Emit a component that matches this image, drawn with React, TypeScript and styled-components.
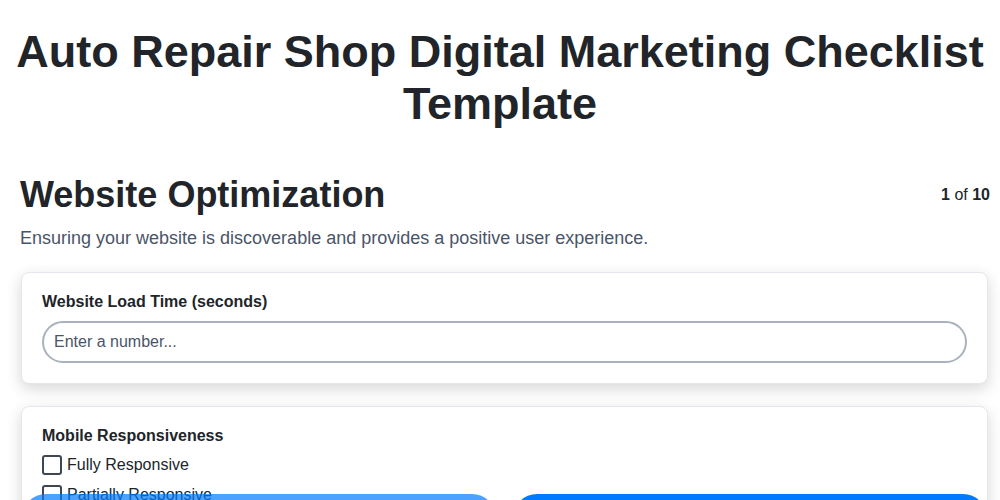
import React from "react";
import styled, { createGlobalStyle } from "styled-components";

const GlobalStyle = createGlobalStyle`
  body {
    margin: 0;
    background: #ffffff;
    font-family: "Liberation Sans", Arial, sans-serif;
    color: #212529;
  }
`;

const Page = styled.div`
  min-height: 100vh;
`;

const Title = styled.h1`
  margin: 26px 0 0;
  font-size: 45px;
  font-weight: 700;
  text-align: center;
  color: #212529;
`;

const Main = styled.main`
  padding: 0 10px 80px 20px;
`;

const SectionHeader = styled.div`
  display: flex;
  align-items: center;
  justify-content: space-between;
  margin-top: 44px;
`;

const SectionTitle = styled.h2`
  margin: 0;
  font-size: 36px;
  font-weight: 700;
`;

const Counter = styled.div`
  font-size: 16px;
  color: #212529;

  b {
    font-weight: 700;
  }
`;

const Description = styled.p`
  margin: 12px 0 23px;
  font-size: 18px;
  color: #4a5568;
`;

const Card = styled.div`
  margin: 0 2px 22px 1px;
  padding: 20px;
  background: #fff;
  border: 1px solid #e6e6ee;
  border-radius: 8px;
  box-shadow: 0 5px 15px rgba(0, 0, 0, 0.16);
`;

const FieldLabel = styled.label`
  display: block;
  font-size: 16px;
  font-weight: 700;
  margin-bottom: 10px;
`;

const NumberInput = styled.input`
  display: block;
  box-sizing: border-box;
  width: 100%;
  padding: 10px 10px;
  font-family: inherit;
  font-size: 16px;
  line-height: 18px;
  color: #212529;
  border: 2px solid #aab2bd;
  border-radius: 22px;
  outline: none;
  background: #fff;

  &::placeholder {
    color: #4a5568;
  }
`;

const OptionList = styled.div`
  display: flex;
  flex-direction: column;
  gap: 10px;
  margin-top: 2px;
`;

const Option = styled.label`
  display: flex;
  align-items: center;
  gap: 5px;
  font-size: 16px;
  color: #212529;
`;

const Box = styled.span`
  box-sizing: border-box;
  width: 20px;
  height: 20px;
  border: 2px solid #3f4654;
  border-radius: 3px;
  background: #fff;
`;

const Footer = styled.div`
  position: fixed;
  left: 0;
  right: 0;
  bottom: -42px;
  display: flex;
  gap: 17px;
  padding: 0 13px 0 22px;
`;

const NavButton = styled.button<{ $primary?: boolean }>`
  flex: 1;
  height: 48px;
  border: none;
  border-radius: 24px;
  background: #007bff;
  opacity: ${(p) => (p.$primary ? 1 : 0.7)};
  color: #fff;
  font-family: inherit;
  font-size: 16px;
  font-weight: 700;
`;

const options = ["Fully Responsive", "Partially Responsive", "Not Responsive"];

export default function App() {
  return (
    <Page>
      <GlobalStyle />
      <Title>
        Auto Repair Shop Digital Marketing Checklist
        <br />
        Template
      </Title>
      <Main>
        <SectionHeader>
          <SectionTitle>Website Optimization</SectionTitle>
          <Counter>
            <b>1</b> of <b>10</b>
          </Counter>
        </SectionHeader>
        <Description>
          Ensuring your website is discoverable and provides a positive user
          experience.
        </Description>

        <Card>
          <FieldLabel>Website Load Time (seconds)</FieldLabel>
          <NumberInput type="text" placeholder="Enter a number..." />
        </Card>

        <Card>
          <FieldLabel>Mobile Responsiveness</FieldLabel>
          <OptionList>
            {options.map((o) => (
              <Option key={o}>
                <Box />
                {o}
              </Option>
            ))}
          </OptionList>
        </Card>
      </Main>
      <Footer>
        <NavButton>Previous</NavButton>
        <NavButton $primary>Next</NavButton>
      </Footer>
    </Page>
  );
}
